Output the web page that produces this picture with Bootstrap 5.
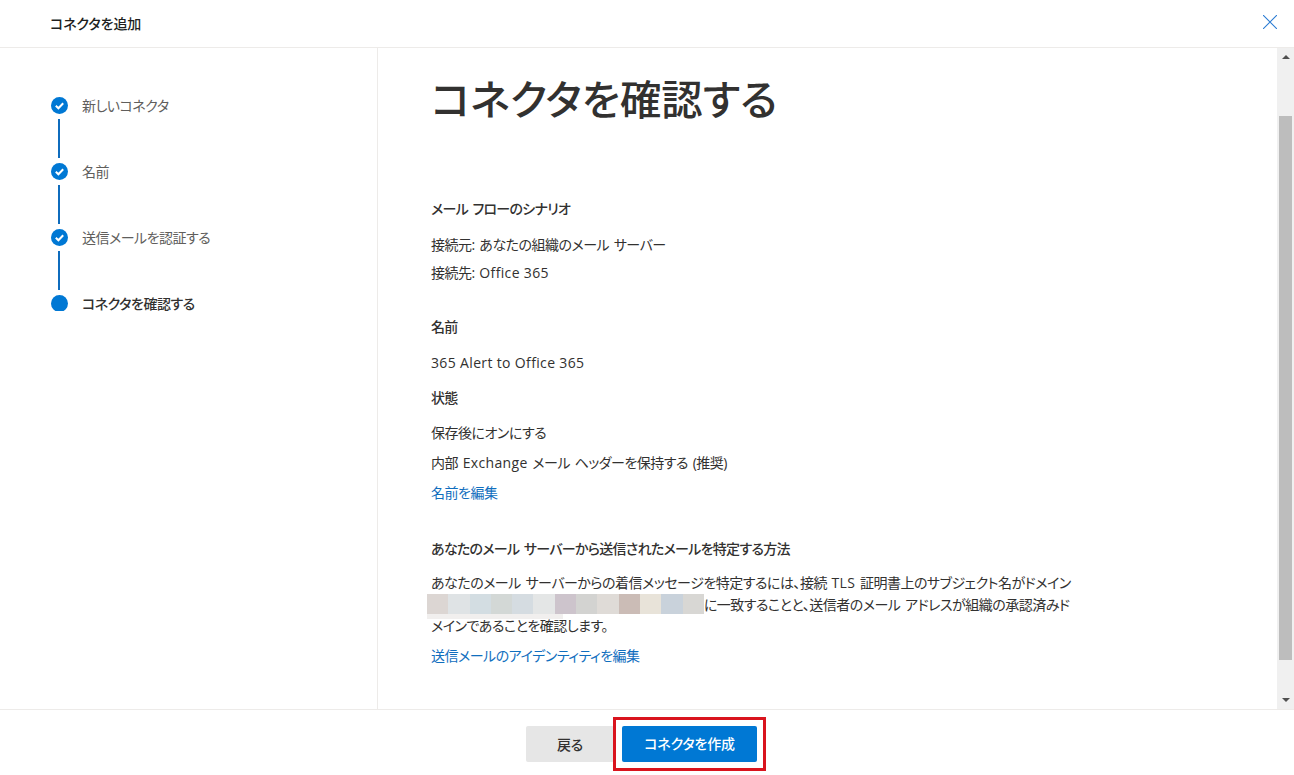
<!DOCTYPE html>
<html lang="ja">
<head>
<meta charset="utf-8">
<title>コネクタを追加</title>
<link href="https://cdn.jsdelivr.net/npm/bootstrap@5.3.0/dist/css/bootstrap.min.css" rel="stylesheet">
<style>
html{height:775px;overflow:hidden;background:#fff}
body{height:775px;overflow:hidden;background:transparent;font-family:"Open Sans","Noto Sans CJK JP",sans-serif;font-size:14px;color:#323130;font-feature-settings:"palt";letter-spacing:-.5px;word-spacing:1.5px}
.lat{letter-spacing:.35px;word-spacing:0}
.app-head{height:48px;border-bottom:1px solid #edebe9;padding:0 8px 0 50px}
.app-title{font-size:14px;font-weight:500;color:#201f1e;line-height:47px;letter-spacing:-.1px}
.app-main{height:661px}
.step-pane{width:378px;border-right:1px solid #edebe9;padding:49px 0 0 51px;flex:none}
.step-item{height:66px;color:#605e5c;line-height:20px}
.step-item.now{color:#323130;font-weight:500}
.step-mark{width:17px;height:17px;flex:none}
.step-mark svg{display:block}
.step-text{margin-left:14px;margin-top:-1px}
.step-line{width:2px;height:39px;background:#0f6cbd;margin:5px 0 0 7px}
.content-pane{padding:0 0 0 53px;min-width:0}
.page-title{font-size:41.4px;font-weight:500;line-height:52px;margin:25px 0 74px;color:#323130;letter-spacing:0}
.sec-title{font-size:14px;font-weight:500;line-height:20px;margin:0;color:#323130;letter-spacing:-.7px}
.txt-line{line-height:20px;margin:0}
.blue-link{color:#106ebe;text-decoration:none}
.body-wrap{width:648px;line-height:21.5px;margin-top:1px}
.mosaic{display:inline-flex;height:20px;vertical-align:-4px;margin-left:-4px;position:relative;z-index:-1}
.mosaic i{display:block;width:21.3px;height:100%}
.mosaic-low{position:absolute;left:0;top:20px;width:136px;height:5px;background:#f1efee}
.bar-track{width:17px;flex:none;background:#f0f0f0;padding:0 2px}
.bar-up,.bar-down{width:0;height:0;border-left:4px solid transparent;border-right:4px solid transparent}
.bar-up{border-bottom:4px solid #505050;margin:7px auto 0}
.bar-down{border-top:4px solid #505050;margin:0 auto 7px}
.bar-thumb{height:544px;background:#bdbdbd;margin-top:57px;margin-bottom:auto;width:13px}
.app-foot{height:66px;border-top:1px solid #edebe9;padding:16px 11px 0 0;gap:8px}
.btn-back,.btn-make{font-feature-settings:"palt";letter-spacing:-.2px;height:36px;font-weight:500;font-size:14px;border:0;border-radius:2px;padding:0}
.btn-back{width:88px;background:#e6e6e6;color:#323130}
.btn-make{width:135px;background:#0078d4;color:#fff}
.make-wrap{outline:3px solid #d9141e;outline-offset:6px;line-height:0}
.btn-x{width:32px;height:32px;background:none;border:0;padding:0;margin-bottom:4px}
</style>
</head>
<body>
<div class="app-head d-flex align-items-center justify-content-between">
  <div class="app-title">コネクタを追加</div>
  <button class="btn-x d-flex align-items-center justify-content-center" aria-label="閉じる" type="button"><svg width="14" height="14" viewBox="0 0 14 14"><path d="M0 0 14 14M14 0 0 14" stroke="#2b7cd3" stroke-width="1.1" fill="none"/></svg></button>
</div>
<div class="app-main d-flex">
  <div class="step-pane">
    <div class="step-item d-flex">
      <div><div class="step-mark"><svg width="17" height="17" viewBox="0 0 17 17"><circle cx="8.5" cy="8.5" r="8.5" fill="#0078d4"/><path d="M4.8 8.8 7.4 11.3 12.2 6.2" stroke="#fff" stroke-width="2" fill="none"/></svg></div><div class="step-line"></div></div>
      <div class="step-text">新しいコネクタ</div>
    </div>
    <div class="step-item d-flex">
      <div><div class="step-mark"><svg width="17" height="17" viewBox="0 0 17 17"><circle cx="8.5" cy="8.5" r="8.5" fill="#0078d4"/><path d="M4.8 8.8 7.4 11.3 12.2 6.2" stroke="#fff" stroke-width="2" fill="none"/></svg></div><div class="step-line"></div></div>
      <div class="step-text">名前</div>
    </div>
    <div class="step-item d-flex">
      <div><div class="step-mark"><svg width="17" height="17" viewBox="0 0 17 17"><circle cx="8.5" cy="8.5" r="8.5" fill="#0078d4"/><path d="M4.8 8.8 7.4 11.3 12.2 6.2" stroke="#fff" stroke-width="2" fill="none"/></svg></div><div class="step-line"></div></div>
      <div class="step-text">送信メールを認証する</div>
    </div>
    <div class="step-item now d-flex">
      <div class="step-mark"><svg width="17" height="16" viewBox="0 0 17 16"><circle cx="8.5" cy="8.5" r="8.5" fill="#0078d4"/></svg></div>
      <div class="step-text">コネクタを確認する</div>
    </div>
  </div>
  <div class="content-pane flex-grow-1">
    <h1 class="page-title">コネクタを確認する</h1>
    <p class="sec-title mb-3">メール フローのシナリオ</p>
    <p class="txt-line mb-2">接続元: あなたの組織のメール サーバー</p>
    <p class="txt-line" style="margin-bottom:34px">接続先: <span class="lat">Office 365</span></p>
    <p class="sec-title mb-3">名前</p>
    <p class="txt-line" style="margin-bottom:15px"><span class="lat">365 Alert to Office 365</span></p>
    <p class="sec-title" style="margin-bottom:15px">状態</p>
    <p class="txt-line" style="margin-bottom:10px">保存後にオンにする</p>
    <p class="txt-line" style="margin-bottom:10px">内部 <span class="lat">Exchange</span> メール ヘッダーを保持する (推奨)</p>
    <p class="txt-line" style="margin-bottom:36px"><a class="blue-link" href="#">名前を編集</a></p>
    <p class="sec-title" style="margin-bottom:13px">あなたのメール サーバーから送信されたメールを特定する方法</p>
    <div class="body-wrap">あなたのメール サーバーからの着信メッセージを特定するには、接続 <span class="lat">TLS</span> 証明書上のサブジェクト名がドメイン <span class="mosaic"><i style="background:#dcd6d3"></i><i style="background:#dfe3e5"></i><i style="background:#d3dde2"></i><i style="background:#d3d8d6"></i><i style="background:#d5dce1"></i><i style="background:#e4e6e6"></i><i style="background:#cdc4cc"></i><i style="background:#d3d3d1"></i><i style="background:#dfdbd7"></i><i style="background:#cbbcb6"></i><i style="background:#e8e3d9"></i><i style="background:#c9d2db"></i><i style="background:#d8d7d4"></i><span class="mosaic-low"></span></span>に一致することと、送信者のメール アドレスが組織の承認済みドメインであることを確認します。</div>
    <p class="txt-line" style="margin-top:9px"><a class="blue-link" href="#">送信メールのアイデンティティを編集</a></p>
  </div>
  <div class="bar-track d-flex flex-column align-items-center">
    <div class="bar-up"></div>
    <div class="bar-thumb"></div>
    <div class="bar-down"></div>
  </div>
</div>
<div class="app-foot d-flex justify-content-center align-items-start">
  <button class="btn-back" type="button">戻る</button>
  <div class="make-wrap"><button class="btn-make" type="button">コネクタを作成</button></div>
</div>
<script src="https://cdn.jsdelivr.net/npm/bootstrap@5.3.0/dist/js/bootstrap.bundle.min.js"></script>
</body>
</html>
